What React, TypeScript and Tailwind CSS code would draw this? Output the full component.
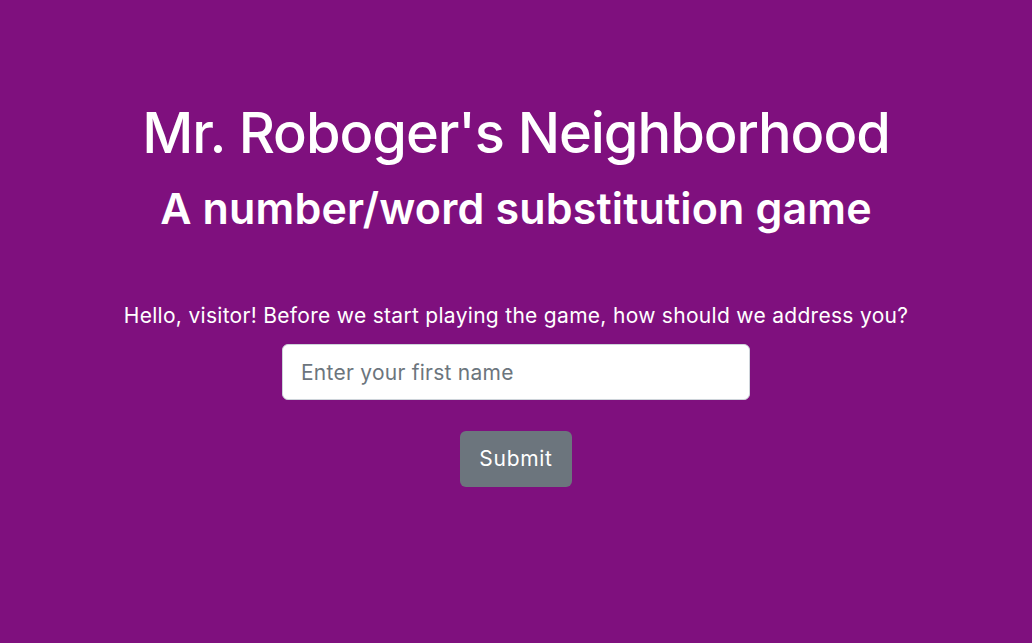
export default function App() {
  return (
    <div className="min-h-[643px] w-full bg-[#7f107e] text-white flex flex-col items-center" style={{ fontFamily: "Inter, 'Noto Sans', sans-serif" }}>
      <h1 className="mt-[99px] text-[56px] leading-[68px] font-medium tracking-[-1.05px]">Mr. Roboger's Neighborhood</h1>
      <h2 className="mt-[15px] text-[43px] leading-[52px] font-semibold tracking-[0.15px]">A number/word substitution game</h2>
      <p className="mt-[67px] text-[21px] leading-[30px] tracking-[0.3px]">Hello, visitor! Before we start playing the game, how should we address you?</p>
      <input
        className="mt-[13px] w-[468px] h-[56px] rounded-[6px] bg-white border border-[#ced4da] px-[18px] text-[21px] tracking-[0.25px] text-[#212529] placeholder:text-[#6c757d] outline-none"
        placeholder="Enter your first name"
      />
      <button className="mt-[31px] h-[56px] w-[112px] rounded-[6px] bg-[#6c757d] text-white text-[21px] tracking-[0.7px]">Submit</button>
    </div>
  );
}
